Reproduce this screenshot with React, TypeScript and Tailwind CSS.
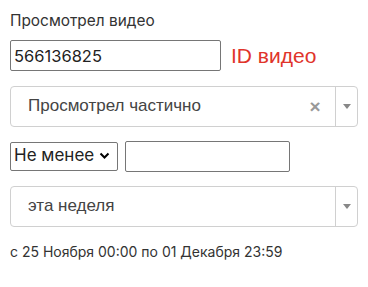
export default function App() {
  return (
    <div className="w-[368px] h-[287px] bg-white pl-[10px] pt-[12px] text-[#333]" style={{ fontFamily: 'Inter, "Noto Sans", sans-serif' }}>
      <div className="text-[15.4px] leading-[18px]">Просмотрел видео</div>

      <div className="mt-[10px] flex items-center">
        <input
          defaultValue="566136825"
          className="w-[211px] h-[31px] border border-[#767676] rounded-[2px] px-[3px] text-[16.5px] text-[#222] outline-none"
          style={{ fontFamily: 'Inter, sans-serif' }}
        />
        <span className="ml-[10px] text-[21px] text-[#e0342b]" style={{ fontFamily: '"Liberation Sans", Arial, sans-serif' }}>
          ID видео
        </span>
      </div>

      <div className="mt-[14px] w-[348px] h-[41px] border border-[#d0d0d0] rounded-[4px] flex items-center" style={{ fontFamily: '"Liberation Sans", Arial, sans-serif' }}>
        <span className="flex-1 pl-[17px] text-[17px] text-[#444]">Просмотрел частично</span>
        <span className="w-[34px] pr-[6px] text-center text-[#999] text-[19px] leading-none font-bold">×</span>
        <span className="w-px h-full bg-[#d0d0d0]"></span>
        <span className="w-[21px] flex justify-center">
          <svg width="8" height="5" viewBox="0 0 8 5"><path d="M0 0h8L4 5z" fill="#888" /></svg>
        </span>
      </div>

      <div className="mt-[14px] flex items-center gap-[7px]">
        <div className="h-[29px] w-[108px] border border-[#767676] rounded-[2px] flex items-center pl-[3px] text-[17px] text-[#222]">
          <span>Не менее</span>
          <svg className="ml-[5px]" width="11" height="8" viewBox="0 0 11 8"><path d="M1.5 1.5l4 4 4-4" stroke="#000" strokeWidth="2" fill="none" /></svg>
        </div>
        <input className="w-[165px] h-[31px] border border-[#767676] rounded-[2px] outline-none" />
      </div>

      <div className="mt-[14px] w-[348px] h-[41px] border border-[#d0d0d0] rounded-[4px] flex items-center" style={{ fontFamily: '"Liberation Sans", Arial, sans-serif' }}>
        <span className="flex-1 pl-[17px] text-[17px] text-[#444]">эта неделя</span>
        <span className="w-px h-full bg-[#d0d0d0]"></span>
        <span className="w-[21px] flex justify-center">
          <svg width="8" height="5" viewBox="0 0 8 5"><path d="M0 0h8L4 5z" fill="#888" /></svg>
        </span>
      </div>

      <div className="mt-[17px] text-[14px] leading-[16px]">с 25 Ноября 00:00 по 01 Декабря 23:59</div>
    </div>
  );
}
